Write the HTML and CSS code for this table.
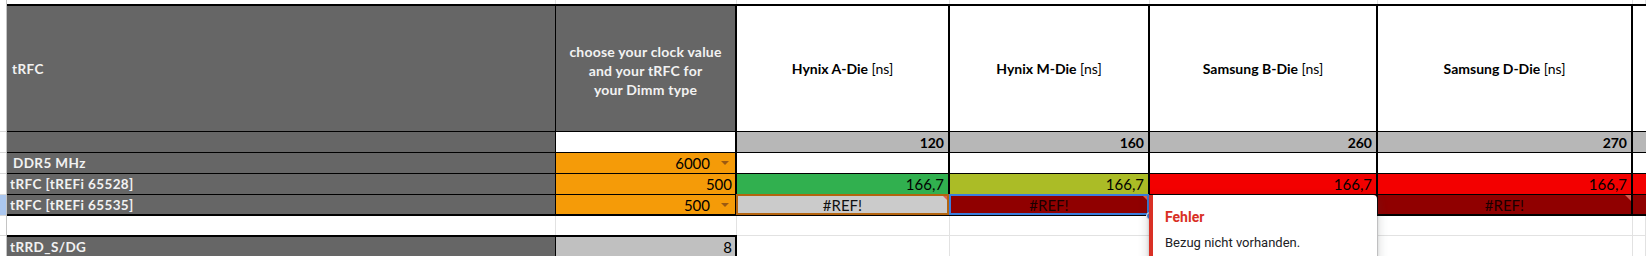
FILE: index.html
```html
<!DOCTYPE html>
<html>
<head>
<meta charset="utf-8">
<title>tRFC</title>
<link rel="stylesheet" href="styles.css">
</head>
<body>
<div class="sheet">
  <div class="rowhead">
    <div class="rh rh-top"></div>
    <div class="rh"></div>
    <div class="rh"></div>
    <div class="rh"></div>
    <div class="rh rh-sel"></div>
    <div class="rh rh-blank"></div>
    <div class="rh rh-last"></div>
  </div>
  <div class="main">
    <div class="cols strip">
      <div></div><div></div><div></div><div></div><div></div><div></div><div></div>
    </div>
    <div class="cols table">
      <!-- header row -->
      <div class="c k1 dk lbl lbl-h">tRFC</div>
      <div class="c kb dk hd2">choose your clock value<br>and your tRFC for<br>your Dimm type</div>
      <div class="c kb hd"><b>Hynix A-Die</b>&nbsp;<span>[ns]</span></div>
      <div class="c kb hd"><b>Hynix M-Die</b>&nbsp;<span>[ns]</span></div>
      <div class="c kb hd"><b>Samsung B-Die</b>&nbsp;<span>[ns]</span></div>
      <div class="c kb hd"><b>Samsung D-Die</b>&nbsp;<span>[ns]</span></div>
      <div class="c"></div>
      <!-- row 2 -->
      <div class="c k1 dk"></div>
      <div class="c kb"></div>
      <div class="c kb gr bnum">120</div>
      <div class="c kb gr bnum">160</div>
      <div class="c kb gr bnum">260</div>
      <div class="c kb gr bnum">270</div>
      <div class="c gr"></div>
      <!-- row 3 -->
      <div class="c k1 dk lbl lbl-ddr">DDR5 MHz</div>
      <div class="c kb or num dd">6000<i class="arrow"></i></div>
      <div class="c kb"></div>
      <div class="c kb"></div>
      <div class="c kb"></div>
      <div class="c kb"></div>
      <div class="c"></div>
      <!-- row 4 -->
      <div class="c k1 dk lbl">tRFC [tREFi 65528]</div>
      <div class="c kb or num tight">500</div>
      <div class="c kb grn num">166,7</div>
      <div class="c kb olv num">166,7</div>
      <div class="c kb red num">166,7</div>
      <div class="c kb red num">166,7</div>
      <div class="c red"></div>
      <!-- row 5 -->
      <div class="c r5 k1 dk lbl">tRFC [tREFi 65535]</div>
      <div class="c r5 kb or num dd">500<i class="arrow"></i></div>
      <div class="c r5 kb lg ctr tri sel-brown">#REF!</div>
      <div class="c r5 kb drd ctr tri sel-blue">#REF!<i class="handle"></i></div>
      <div class="c r5 kb drd ctr">#REF!</div>
      <div class="c r5 kb drd ctr tri tri-soft">#REF!</div>
      <div class="c r5 drd"></div>
    </div>
    <div class="cols blank">
      <div></div><div></div><div></div><div></div><div></div><div></div><div></div>
    </div>
    <div class="cols trrd">
      <div class="t1 lbl">tRRD_S/DG</div>
      <div class="t2 num tight">8</div>
      <div class="tg"></div><div class="tg"></div><div class="tg"></div><div class="tg"></div><div class="tg"></div>
    </div>
  </div>
  <div class="tip">
    <div class="tip-title">Fehler</div>
    <div class="tip-text">Bezug nicht vorhanden.</div>
  </div>
</div>
</body>
</html>
```
FILE: styles.css
```css
* { box-sizing: border-box; }
html, body { margin: 0; padding: 0; }
body {
  width: 1646px;
  height: 256px;
  overflow: hidden;
  background: #fff;
  font-family: Lato, "Liberation Sans", sans-serif;
  color: #000;
}
.sheet {
  position: relative;
  display: flex;
  width: 1646px;
  height: 256px;
  overflow: hidden;
}

/* spreadsheet row header strip */
.rowhead {
  flex: none;
  width: 7px;
  display: flex;
  flex-direction: column;
  border-right: 1px solid #c4c4c4;
}
.rh { flex: none; height: 21px; border-bottom: 1px solid #d8d8d8; }
.rh-top { height: 132px; }
.rh-sel {
  background-color: #e6effc;
  background-image: radial-gradient(circle, #a9c6ee 0.7px, transparent 0.9px);
  background-size: 2px 2px;
}
.rh-blank { height: 20px; }
.rh-last { flex: 1; border-bottom: none; }

.main { flex: 1; min-width: 0; display: flex; flex-direction: column; }
.cols {
  flex: none;
  display: grid;
  grid-template-columns: 549px 181px 213px 200px 228px 255px 1fr;
}
.strip { height: 4px; }
.blank { height: 19px; }
.strip > div, .blank > div { border-right: 1px solid #e2e2e2; }

.table {
  border-top: 2px solid #000;
  border-bottom: 2px solid #000;
  grid-template-rows: 126px 21px 21px 21px 19px;
}
.c {
  position: relative;
  display: flex;
  align-items: center;
  border-bottom: 1px solid #000;
  white-space: nowrap;
}
.r5 { border-bottom: none; }
.k1 { border-right: 1px solid #000; }
.kb { border-right: 2px solid #000; }

/* fills */
.dk { background: #666666; color: #f2f2f2; font-weight: 700; }
.or { background: #f59b08; }
.gr { background: #b7b7b7; }
.grn { background: #31b04f; }
.olv { background: #abbc26; }
.red { background: #f30000; }
.drd { background: #900000; }
.lg { background: #cbcbcb; }

/* text styles */
.lbl { font-size: 13.5px; letter-spacing: 0.4px; padding-left: 3px; }
.lbl-h { padding-left: 5px; }
.lbl-ddr { padding-left: 6px; }
.hd2 {
  justify-content: center;
  text-align: center;
  font-size: 14px;
  line-height: 19px;
  letter-spacing: 0.2px;
  padding-top: 3px;
}
.hd { justify-content: center; font-size: 14px; }
.hd b { font-weight: 700; }
.hd span { font-weight: 400; }
.num { justify-content: flex-end; padding-right: 4px; font-size: 15px; }
.tight { padding-right: 3px; }
.bnum { justify-content: flex-end; padding-right: 4px; font-size: 14px; font-weight: 700; }
.ctr { justify-content: center; font-size: 15px; color: #1a0000; }
.lg.ctr { color: #111; }

.dd { padding-right: 6px; gap: 11px; }
.arrow {
  display: block;
  width: 0;
  height: 0;
  border-left: 4px solid transparent;
  border-right: 4px solid transparent;
  border-top: 4px solid #9b5a12;
}

/* error triangles and selections */
.tri::before {
  content: "";
  position: absolute;
  top: 0;
  right: 0;
  width: 0;
  height: 0;
  border-top: 6px solid #e0604c;
  border-left: 6px solid transparent;
}
.tri-soft::before { border-top-color: #d4574d; }
.sel-brown::after,
.sel-blue::after {
  content: "";
  position: absolute;
  top: -1px;
  left: -1px;
  right: -1px;
  bottom: -1px;
  border: 2px solid #b3640f;
}
.sel-blue::after { border-color: #3b7ddc; }
.handle {
  position: absolute;
  right: -6px;
  bottom: -6px;
  width: 8px;
  height: 8px;
  border-radius: 50%;
  background: #3b7ddc;
  border: 1px solid #fff;
  z-index: 2;
}

/* tRRD row */
.trrd { height: 30px; }
.t1 {
  display: flex;
  align-items: center;
  background: #666666;
  color: #f2f2f2;
  font-weight: 700;
  border-top: 2px solid #000;
  border-right: 1px solid #000;
  padding-bottom: 8px;
}
.t2 {
  display: flex;
  align-items: center;
  background: #c0c0c0;
  border-top: 2px solid #000;
  border-right: 2px solid #000;
  padding-bottom: 8px;
}
.tg { border-top: 1px solid #e2e2e2; border-right: 1px solid #e2e2e2; }

/* error tooltip */
.tip {
  position: absolute;
  left: 1149px;
  top: 195px;
  width: 228px;
  height: 80px;
  z-index: 5;
  background: #fff;
  border-left: 4px solid #d93025;
  border-radius: 0 4px 4px 0;
  box-shadow: 0 1px 3px rgba(60, 64, 67, 0.3), 0 4px 8px 3px rgba(60, 64, 67, 0.15);
  padding: 14px 0 0 12px;
  font-family: Roboto, "Liberation Sans", sans-serif;
}
.tip-title { font-size: 14px; line-height: 16px; font-weight: 700; color: #d93025; }
.tip-text { margin-top: 10px; font-size: 13px; line-height: 16px; color: #202124; }
```
